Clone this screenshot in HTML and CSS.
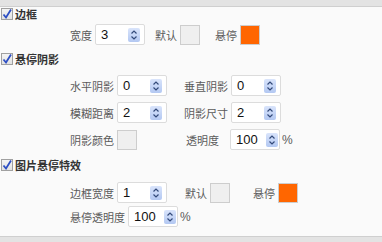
FILE: index.html
```html
<!DOCTYPE html>
<html lang="zh-CN">
<head>
    <meta charset="UTF-8">
    <title>悬停设置</title>
    <link rel="stylesheet" href="styles.css">
</head>
<body>
    <div class="panel">

        <div class="title t1">
            <span class="chk"><svg width="12" height="12" viewBox="0 0 12 12"><path d="M2.5 6.5 L5 9.5 L10 1.5" fill="none" stroke="#2d4fc4" stroke-width="1.8"/></svg></span>
            <span class="titleName">边框</span>
        </div>
        <div class="row r1">
            <span class="lbl">宽度</span>
            <span class="num">3<span class="spin"><svg width="12" height="14" viewBox="0 0 12 14"><path d="M3.5 5.5 L6 3 L8.5 5.5 M3.5 8.5 L6 11 L8.5 8.5" fill="none" stroke="#334a7a" stroke-width="1.2"/></svg></span></span>
            <span class="lbl gapA">默认</span>
            <span class="swatch"></span>
            <span class="lbl gapB">悬停</span>
            <span class="swatch hot"></span>
        </div>

        <div class="title t2">
            <span class="chk"><svg width="12" height="12" viewBox="0 0 12 12"><path d="M2.5 6.5 L5 9.5 L10 1.5" fill="none" stroke="#2d4fc4" stroke-width="1.8"/></svg></span>
            <span class="titleName">悬停阴影</span>
        </div>
        <div class="grid">
            <div class="cell">
                <span class="lbl">水平阴影</span>
                <span class="num">0<span class="spin"><svg width="12" height="14" viewBox="0 0 12 14"><path d="M3.5 5.5 L6 3 L8.5 5.5 M3.5 8.5 L6 11 L8.5 8.5" fill="none" stroke="#334a7a" stroke-width="1.2"/></svg></span></span>
            </div>
            <div class="cell">
                <span class="lbl">垂直阴影</span>
                <span class="num">0<span class="spin"><svg width="12" height="14" viewBox="0 0 12 14"><path d="M3.5 5.5 L6 3 L8.5 5.5 M3.5 8.5 L6 11 L8.5 8.5" fill="none" stroke="#334a7a" stroke-width="1.2"/></svg></span></span>
            </div>
            <div class="cell">
                <span class="lbl">模糊距离</span>
                <span class="num">2<span class="spin"><svg width="12" height="14" viewBox="0 0 12 14"><path d="M3.5 5.5 L6 3 L8.5 5.5 M3.5 8.5 L6 11 L8.5 8.5" fill="none" stroke="#334a7a" stroke-width="1.2"/></svg></span></span>
            </div>
            <div class="cell">
                <span class="lbl">阴影尺寸</span>
                <span class="num">2<span class="spin"><svg width="12" height="14" viewBox="0 0 12 14"><path d="M3.5 5.5 L6 3 L8.5 5.5 M3.5 8.5 L6 11 L8.5 8.5" fill="none" stroke="#334a7a" stroke-width="1.2"/></svg></span></span>
            </div>
            <div class="cell">
                <span class="lbl">阴影颜色</span>
                <span class="swatch"></span>
            </div>
            <div class="cell">
                <span class="lbl opacity">透明度</span>
                <span class="num pct">100<span class="spin"><svg width="12" height="14" viewBox="0 0 12 14"><path d="M3.5 5.5 L6 3 L8.5 5.5 M3.5 8.5 L6 11 L8.5 8.5" fill="none" stroke="#334a7a" stroke-width="1.2"/></svg></span></span>
                <span class="unit">%</span>
            </div>
        </div>

        <div class="title t3">
            <span class="chk"><svg width="12" height="12" viewBox="0 0 12 12"><path d="M2.5 6.5 L5 9.5 L10 1.5" fill="none" stroke="#2d4fc4" stroke-width="1.8"/></svg></span>
            <span class="titleName">图片悬停特效</span>
        </div>
        <div class="row r3">
            <span class="lbl">边框宽度</span>
            <span class="num">1<span class="spin"><svg width="12" height="14" viewBox="0 0 12 14"><path d="M3.5 5.5 L6 3 L8.5 5.5 M3.5 8.5 L6 11 L8.5 8.5" fill="none" stroke="#334a7a" stroke-width="1.2"/></svg></span></span>
            <span class="lbl gapC">默认</span>
            <span class="swatch"></span>
            <span class="lbl gapD">悬停</span>
            <span class="swatch hot"></span>
        </div>
        <div class="row r4">
            <span class="lbl">悬停透明度</span>
            <span class="num pct">100<span class="spin"><svg width="12" height="14" viewBox="0 0 12 14"><path d="M3.5 5.5 L6 3 L8.5 5.5 M3.5 8.5 L6 11 L8.5 8.5" fill="none" stroke="#334a7a" stroke-width="1.2"/></svg></span></span>
            <span class="unit">%</span>
        </div>

    </div>
</body>
</html>
```

FILE: styles.css
```css
html {
    margin: 0;
    padding: 0;
    background: #e3e3e3;
}

body {
    margin: 0;
    padding: 6px 0 0 0;
    font-family: "Noto Sans CJK SC", "Liberation Sans", sans-serif;
    font-size: 11px;
    color: #5a5a5a;
}

.panel {
    box-sizing: border-box;
    height: 231px;
    background: #fafafa;
    border-top: 1px solid #cfcfcf;
    border-bottom: 1px solid #cfcfcf;
}

.title {
    display: flex;
    align-items: center;
    height: 14px;
    padding-left: 1px;
}

.t1 { margin-top: 0; }
.t2 { margin-top: 7px; }
.t3 { margin-top: 8px; }

.chk {
    box-sizing: border-box;
    display: block;
    width: 12px;
    height: 12px;
    border: 1px solid #a0a0a0;
    background: linear-gradient(#f4f4f4, #e2e2e2);
}

.chk svg {
    display: block;
    margin: -1px 0 0 -1px;
}

.titleName {
    margin-left: 2px;
    font-weight: bold;
    color: #333;
    font-size: 11px;
}

.row {
    display: flex;
    align-items: center;
    height: 21px;
    padding-left: 70px;
}

.r1 { margin-top: 3px; }
.r3 { margin-top: 10px; }
.r4 { margin-top: 3px; }

.lbl {
    margin-right: 3px;
    white-space: nowrap;
}

.opacity {
    margin-left: 2px;
    margin-right: 11px;
}

.gapA { margin-left: 10px; }
.gapB { margin-left: 15px; }
.gapC { margin-left: 18px; }
.gapD { margin-left: 23px; }

.num {
    position: relative;
    box-sizing: border-box;
    display: flex;
    align-items: center;
    width: 50px;
    height: 21px;
    padding-left: 5px;
    background: #fff;
    border: 1px solid #dcdcdc;
    border-radius: 2px;
    font-family: "Liberation Sans", sans-serif;
    font-size: 13px;
    color: #111;
}

.spin {
    position: absolute;
    top: 3px;
    right: 4px;
    width: 12px;
    height: 14px;
    border-radius: 2px;
    background: linear-gradient(#d9e4fb, #b3c8f2);
}

.pct .spin {
    right: 1px;
}

.spin svg {
    display: block;
}

.swatch {
    box-sizing: border-box;
    display: block;
    width: 20px;
    height: 20px;
    background: #efefef;
    border: 1px solid #cdcdcd;
}

.hot {
    background: #ff6600;
}

.unit {
    margin-left: 2px;
    font-family: "Liberation Sans", sans-serif;
    font-size: 12px;
}

.grid {
    display: grid;
    grid-template-columns: 114px auto;
    row-gap: 6px;
    margin-top: 9px;
    padding-left: 70px;
}

.cell {
    display: flex;
    align-items: center;
    height: 21px;
}
```
